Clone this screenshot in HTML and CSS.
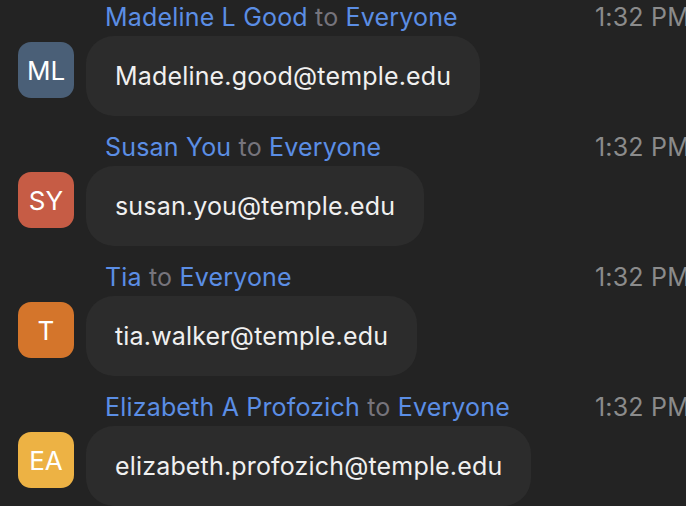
FILE: index.html
```html
<!DOCTYPE html>
<html>
<head>
<meta charset="utf-8">
<link rel="stylesheet" href="styles.css">
</head>
<body>
<div class="chat">
  <div class="msg">
    <div class="head">
      <span class="who"><span class="name">Madeline L Good</span> <span class="to">to</span> <span class="name">Everyone</span></span>
      <span class="time">1:32 PM</span>
    </div>
    <div class="body">
      <div class="avatar av-ml">ML</div>
      <div class="bubble">Madeline.good@temple.edu</div>
    </div>
  </div>
  <div class="msg">
    <div class="head">
      <span class="who"><span class="name">Susan You</span> <span class="to">to</span> <span class="name">Everyone</span></span>
      <span class="time">1:32 PM</span>
    </div>
    <div class="body">
      <div class="avatar av-sy">SY</div>
      <div class="bubble">susan.you@temple.edu</div>
    </div>
  </div>
  <div class="msg">
    <div class="head">
      <span class="who"><span class="name">Tia</span> <span class="to">to</span> <span class="name">Everyone</span></span>
      <span class="time">1:32 PM</span>
    </div>
    <div class="body">
      <div class="avatar av-t">T</div>
      <div class="bubble">tia.walker@temple.edu</div>
    </div>
  </div>
  <div class="msg">
    <div class="head">
      <span class="who"><span class="name">Elizabeth A Profozich</span> <span class="to">to</span> <span class="name">Everyone</span></span>
      <span class="time">1:32 PM</span>
    </div>
    <div class="body">
      <div class="avatar av-ea">EA</div>
      <div class="bubble">elizabeth.profozich@temple.edu</div>
    </div>
  </div>
</div>
</body>
</html>
```
FILE: styles.css
```css
html, body {
  margin: 0;
  padding: 0;
  background: #232323;
  overflow: hidden;
}
body {
  width: 686px;
  height: 506px;
  font-family: Inter, "Noto Sans", sans-serif;
  -webkit-font-smoothing: antialiased;
}
.chat {
  display: flex;
  flex-direction: column;
}
.msg {
  height: 130px;
  display: flex;
  flex-direction: column;
}
.head {
  display: flex;
  height: 32px;
  padding-top: 2px;
  box-sizing: border-box;
  line-height: 30px;
  font-size: 25px;
  letter-spacing: 0.18px;
  white-space: nowrap;
}
.who {
  margin-left: 105px;
  flex: 1;
}
.name {
  color: #5b8ee5;
}
.to {
  color: #76747c;
}
.time {
  color: #8b8b8b;
  width: 91px;
  overflow: hidden;
}
.body {
  display: flex;
  margin-top: 4px;
  padding-left: 18px;
  gap: 12px;
  align-items: flex-start;
}
.avatar {
  width: 56px;
  height: 56px;
  margin-top: 6px;
  border-radius: 13px;
  color: #fff;
  font-size: 26px;
  display: flex;
  align-items: center;
  justify-content: center;
}
.av-ml { background: #4a5f77; }
.av-sy { background: #c65c45; }
.av-t { background: #d4752b; }
.av-ea { background: #edb244; }
.bubble {
  height: 80px;
  box-sizing: border-box;
  padding: 0 29px;
  border-radius: 28px;
  background: #2c2c2c;
  color: #f0f0f0;
  font-size: 25px;
  letter-spacing: 0.17px;
  display: flex;
  align-items: center;
}
```
